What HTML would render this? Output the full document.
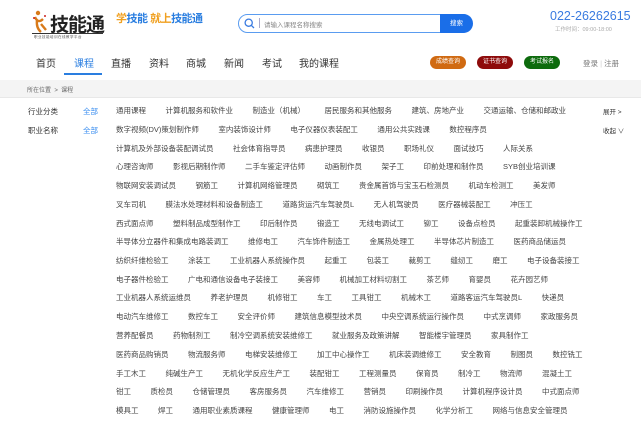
<!DOCTYPE html>
<html><head><meta charset="utf-8"><style>
*{margin:0;padding:0;box-sizing:border-box}
body{width:641px;height:422px;overflow:hidden;background:#fff;font-family:"Liberation Sans","Noto Sans CJK SC",sans-serif;position:relative;color:#333}
.a{position:absolute;white-space:nowrap}
.nav{font-size:10px;color:#333;top:55px}
.badge{top:56px;height:13px;width:36px;border-radius:7px;color:#fff;font-size:6px;text-align:center;line-height:13px}
.row{position:absolute;left:116px;display:flex;font-size:7.5px;color:#444;white-space:nowrap;line-height:10px}
.row span{margin-right:19.5px}
.lbl{font-size:7.5px;color:#333}
.all{font-size:7.5px;color:#3a8ef0}
</style></head><body>
<svg class="a" style="left:32px;top:10px" width="20" height="24" viewBox="0 0 20 24"><circle cx="6" cy="3" r="2.2" fill="#d87a1a"/><path d="M3 7 Q6 14 11 9 M5 10 Q4 18 9 22 M9 14 L14 20" stroke="#d87a1a" stroke-width="2.4" fill="none"/><circle cx="2" cy="8" r="1" fill="#c22"/><circle cx="13" cy="6" r="1" fill="#c22"/></svg>
<div class="a" style="left:50px;top:10px;font-size:19px;font-weight:bold;color:#222;letter-spacing:-1px">技能通</div>
<div class="a" style="left:32px;top:33px;width:71px;height:1px;background:#333"></div>
<div class="a" style="left:34px;top:35px;font-size:3.5px;color:#555;letter-spacing:0.5px">职业技能培训在线教学平台</div>
<div class="a" style="left:116px;top:10px;font-size:11px;font-weight:bold;letter-spacing:-0.5px"><span style="color:#f0a020">学</span><span style="color:#2a7ee0">技能 </span><span style="color:#f0a020">就上</span><span style="color:#2a7ee0">技能通</span></div>
<div class="a" style="left:238px;top:14px;width:234px;height:19px;border:1.2px solid #5a9cf0;border-radius:10px"></div>
<div class="a" style="left:440px;top:14px;width:33px;height:19px;background:#1a6ee8;border-radius:0 10px 10px 0;color:#fff;font-size:6.5px;text-align:center;line-height:19px">搜索</div>
<svg class="a" style="left:244px;top:18px" width="11" height="11" viewBox="0 0 11 11"><circle cx="4.7" cy="4.7" r="3.6" stroke="#3a7be0" stroke-width="1.3" fill="none"/><path d="M7.4 7.4 L10 10" stroke="#3a7be0" stroke-width="1.3"/></svg>
<div class="a" style="left:259px;top:18px;width:1px;height:10px;background:#aac"></div>
<div class="a" style="left:264px;top:19px;font-size:6.5px;color:#888">请输入课程名称搜索</div>
<div class="a" style="left:550px;top:9px;font-size:12.5px;color:#3a7be0">022-26262615</div>
<div class="a" style="left:555px;top:25px;font-size:5.5px;color:#aaa">工作时间：09:00-18:00</div>
<div class="a nav" style="left:36px">首页</div>
<div class="a nav" style="left:74px;color:#2a7ee0">课程</div>
<div class="a nav" style="left:111px">直播</div>
<div class="a nav" style="left:149px">资料</div>
<div class="a nav" style="left:186px">商城</div>
<div class="a nav" style="left:224px">新闻</div>
<div class="a nav" style="left:262px">考试</div>
<div class="a nav" style="left:299px">我的课程</div>
<div class="a" style="left:64px;top:73px;width:38px;height:2px;background:#2a7ee0"></div>
<div class="a badge" style="left:430px;background:#d06a12">成绩查询</div>
<div class="a badge" style="left:477px;background:#8e0b0b">证书查询</div>
<div class="a badge" style="left:524px;background:#0d6b0d">考试报名</div>
<div class="a" style="left:583px;top:58px;font-size:7.5px;color:#777">登录 <span style="color:#ccc">|</span> 注册</div>
<div class="a" style="left:0;top:80px;width:641px;height:18px;background:#f4f4f4;border-bottom:1px solid #e8e8e8"></div>
<div class="a" style="left:27px;top:85px;font-size:6px;color:#666">所在位置 &nbsp;&gt;&nbsp; 课程</div>
<div class="a lbl" style="left:28px;top:106px">行业分类</div>
<div class="a all" style="left:83px;top:106px">全部</div>
<div class="a lbl" style="left:28px;top:125px">职业名称</div>
<div class="a all" style="left:83px;top:125px">全部</div>
<div class="a" style="left:603px;top:106px;font-size:6.5px;color:#333">展开 &gt;</div>
<div class="a" style="left:603px;top:125px;font-size:6.5px;color:#333">收起 ∨</div>
<div class="row" style="top:106px"><span>通用课程</span><span>计算机服务和软件业</span><span>制造业（机械）</span><span>居民服务和其他服务</span><span>建筑、房地产业</span><span>交通运输、仓储和邮政业</span></div>
<div class="row" style="top:125px"><span>数字视频(DV)策划制作师</span><span>室内装饰设计师</span><span>电子仪器仪表装配工</span><span>通用公共实践课</span><span>数控程序员</span></div>
<div class="row" style="top:143.5px"><span>计算机及外部设备装配调试员</span><span>社会体育指导员</span><span>病患护理员</span><span>收银员</span><span>职场礼仪</span><span>面试技巧</span><span>人际关系</span></div>
<div class="row" style="top:162px"><span>心理咨询师</span><span>影视后期制作师</span><span>二手车鉴定评估师</span><span>动画制作员</span><span>架子工</span><span>印前处理和制作员</span><span>SYB创业培训课</span></div>
<div class="row" style="top:181px"><span>物联网安装调试员</span><span>钢筋工</span><span>计算机网络管理员</span><span>砌筑工</span><span>贵金属首饰与宝玉石检测员</span><span>机动车检测工</span><span>美发师</span></div>
<div class="row" style="top:200px"><span>叉车司机</span><span>膜法水处理材料和设备制造工</span><span>道路货运汽车驾驶员L</span><span>无人机驾驶员</span><span>医疗器械装配工</span><span>冲压工</span></div>
<div class="row" style="top:218.5px"><span>西式面点师</span><span>塑料制品成型制作工</span><span>印后制作员</span><span>锻造工</span><span>无线电调试工</span><span>铆工</span><span>设备点检员</span><span>起重装卸机械操作工</span></div>
<div class="row" style="top:237px"><span>半导体分立器件和集成电路装调工</span><span>维修电工</span><span>汽车饰件制造工</span><span>金属热处理工</span><span>半导体芯片制造工</span><span>医药商品储运员</span></div>
<div class="row" style="top:256px"><span>纺织纤维检验工</span><span>涂装工</span><span>工业机器人系统操作员</span><span>起重工</span><span>包装工</span><span>裁剪工</span><span>缝纫工</span><span>磨工</span><span>电子设备装接工</span></div>
<div class="row" style="top:275px"><span>电子器件检验工</span><span>广电和通信设备电子装接工</span><span>美容师</span><span>机械加工材料切割工</span><span>茶艺师</span><span>育婴员</span><span>花卉园艺师</span></div>
<div class="row" style="top:293px"><span>工业机器人系统运维员</span><span>养老护理员</span><span>机修钳工</span><span>车工</span><span>工具钳工</span><span>机械木工</span><span>道路客运汽车驾驶员L</span><span>快递员</span></div>
<div class="row" style="top:312px"><span>电动汽车维修工</span><span>数控车工</span><span>安全评价师</span><span>建筑信息模型技术员</span><span>中央空调系统运行操作员</span><span>中式烹调师</span><span>家政服务员</span></div>
<div class="row" style="top:331px"><span>营养配餐员</span><span>药物制剂工</span><span>制冷空调系统安装维修工</span><span>就业服务及政策讲解</span><span>智能楼宇管理员</span><span>家具制作工</span></div>
<div class="row" style="top:350px"><span>医药商品购销员</span><span>物流服务师</span><span>电梯安装维修工</span><span>加工中心操作工</span><span>机床装调维修工</span><span>安全教育</span><span>制图员</span><span>数控铣工</span></div>
<div class="row" style="top:369px"><span>手工木工</span><span>纯碱生产工</span><span>无机化学反应生产工</span><span>装配钳工</span><span>工程测量员</span><span>保育员</span><span>制冷工</span><span>物流师</span><span>混凝土工</span></div>
<div class="row" style="top:387px"><span>钳工</span><span>质检员</span><span>仓储管理员</span><span>客房服务员</span><span>汽车维修工</span><span>营销员</span><span>印刷操作员</span><span>计算机程序设计员</span><span>中式面点师</span></div>
<div class="row" style="top:406px"><span>模具工</span><span>焊工</span><span>通用职业素质课程</span><span>健康管理师</span><span>电工</span><span>消防设施操作员</span><span>化学分析工</span><span>网络与信息安全管理员</span></div>
</body></html>
